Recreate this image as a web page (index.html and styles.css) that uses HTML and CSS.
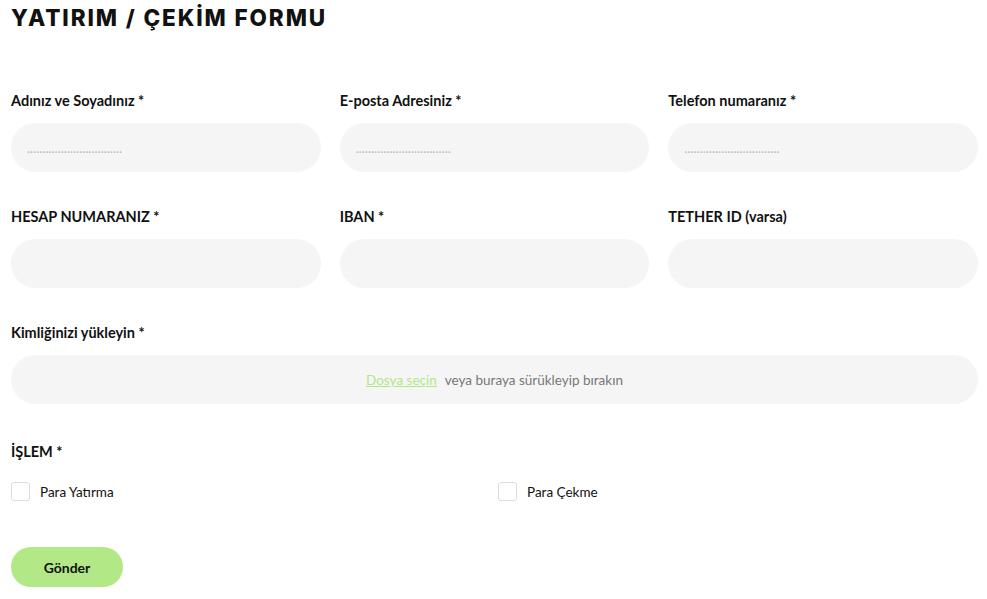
FILE: index.html
```html
<!DOCTYPE html>
<html lang="tr">
<head>
    <meta charset="UTF-8">
    <meta name="viewport" content="width=device-width, initial-scale=1.0">
    <title>Yatırım / Çekim Formu</title>
    <link rel="stylesheet" href="styles.css">
</head>
<body>
    <div class="container">
        <h1>YATIRIM / ÇEKİM FORMU</h1>

        <form class="form" onsubmit="return false;">
            <div class="row">
                <div class="form-group">
                    <label for="ad">Adınız ve Soyadınız *</label>
                    <input type="text" id="ad" placeholder="..............................." />
                </div>
                <div class="form-group">
                    <label for="eposta">E-posta Adresiniz *</label>
                    <input type="text" id="eposta" placeholder="..............................." />
                </div>
                <div class="form-group">
                    <label for="tel">Telefon numaranız *</label>
                    <input type="text" id="tel" placeholder="..............................." />
                </div>
            </div>

            <div class="row">
                <div class="form-group">
                    <label for="hesap">HESAP NUMARANIZ *</label>
                    <input type="text" id="hesap" />
                </div>
                <div class="form-group">
                    <label for="iban">IBAN *</label>
                    <input type="text" id="iban" />
                </div>
                <div class="form-group">
                    <label for="tether">TETHER ID (varsa)</label>
                    <input type="text" id="tether" />
                </div>
            </div>

            <div class="form-group upload-group">
                <label>Kimliğinizi yükleyin *</label>
                <div class="upload">
                    <a href="#" class="upload-link">Dosya seçin</a>
                    <span>veya buraya sürükleyip bırakın</span>
                </div>
            </div>

            <div class="form-group islem">
                <label>İŞLEM *</label>
                <div class="choices">
                    <label class="choice"><input type="checkbox" /> <span>Para Yatırma</span></label>
                    <label class="choice"><input type="checkbox" /> <span>Para Çekme</span></label>
                </div>
            </div>

            <button type="submit">Gönder</button>
        </form>
    </div>
</body>
</html>
```

FILE: styles.css
```css
body {
    font-family: "Lato", "Liberation Sans", sans-serif;
    margin: 0;
    padding: 0 9px 0 11px;
    background-color: #fff;
    color: #111;
}
.container {
    max-width: 967px;
}
h1 {
    font-family: "Inter", "Liberation Sans", sans-serif;
    font-weight: 800;
    font-size: 22.5px;
    letter-spacing: 1.9px;
    margin: 3px 0 0;
    line-height: 30px;
}
.form {
    margin-top: 58px;
}
.row {
    display: grid;
    grid-template-columns: repeat(3, 1fr);
    column-gap: 19px;
}
.form-group {
    margin-bottom: 35px;
}
.form-group > label {
    display: block;
    font-size: 14.5px;
    font-weight: bold;
    line-height: 20px;
    margin-bottom: 12px;
}
input[type="text"] {
    display: block;
    box-sizing: border-box;
    width: 100%;
    height: 49px;
    padding: 0 16px;
    border: none;
    border-radius: 25px;
    background-color: #f5f5f5;
    font-family: inherit;
    font-size: 13px;
}
input[type="text"]::placeholder {
    color: #b9b9b9;
}
.upload-group {
    margin-bottom: 38px;
}
.upload {
    height: 49px;
    border-radius: 25px;
    background-color: #f5f5f5;
    display: flex;
    align-items: center;
    justify-content: center;
    gap: 8px;
    font-size: 13.5px;
    color: #777;
}
.upload-link {
    color: #b2e885;
    text-decoration: underline;
}
.islem {
    margin-bottom: 46px;
}
.choices {
    display: grid;
    grid-template-columns: 1fr 1fr;
    column-gap: 7px;
    margin-top: 20px;
}
.choice {
    display: flex;
    align-items: center;
    gap: 10px;
    font-size: 13.5px;
}
.choice input {
    appearance: none;
    margin: 0;
    width: 19px;
    height: 19px;
    border: 1px solid #ddd;
    border-radius: 3px;
    background: #fff;
}
button {
    width: 112px;
    height: 40px;
    border: none;
    border-radius: 20px;
    background-color: #b2e885;
    color: #111;
    font-family: inherit;
    font-size: 14px;
    font-weight: bold;
    cursor: pointer;
}
button:hover {
    background-color: #9fd872;
}
```
